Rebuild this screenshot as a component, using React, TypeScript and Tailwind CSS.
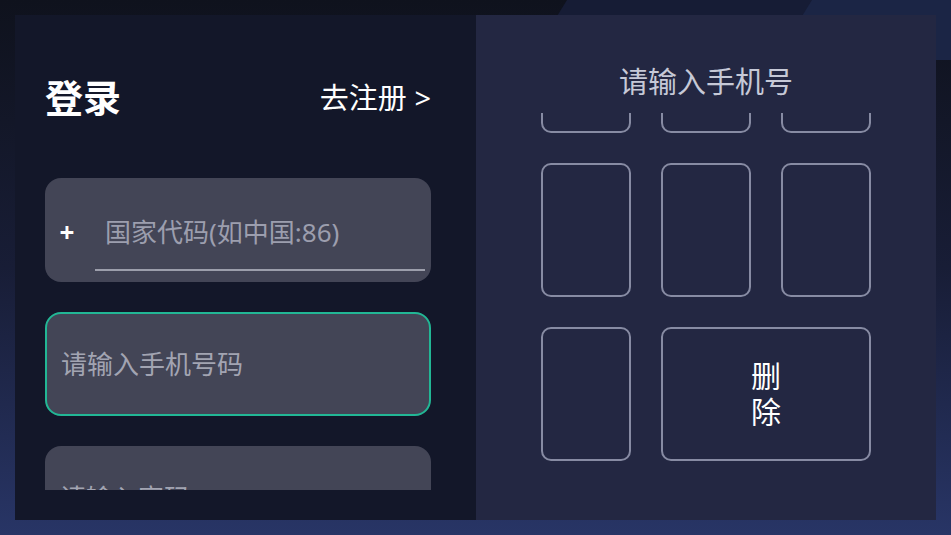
const KEYS = [0, 1, 2, 3, 4, 5];

function Key({ wide, children }: { wide?: boolean; children?: React.ReactNode }) {
  return (
    <div
      className={`h-[134px] rounded-[10px] border-2 border-[#878ba3] flex flex-col items-center justify-center text-white text-[30px] leading-[36px] ${
        wide ? 'col-span-2' : ''
      }`}
    >
      {children}
    </div>
  );
}

export default function App() {
  return (
    <div
      className="relative w-[951px] h-[535px] overflow-hidden p-[15px] bg-gradient-to-b from-[#0f121d] via-[#181d36] to-[#283566]"
      style={{ fontFamily: '"Noto Sans", "Noto Sans CJK SC", sans-serif' }}
    >
      {/* background bands at top right */}
      <div className="absolute inset-0 bg-[#161c35] [clip-path:polygon(567px_0,100%_0,100%_60px,530px_60px)]" />
      <div className="absolute inset-0 bg-[#1b2545] [clip-path:polygon(812px_0,100%_0,100%_60px,775px_60px)]" />

      <div className="relative flex h-full">
        {/* left: login form */}
        <div className="w-[461px] bg-[#131729] pl-[30px] pr-[45px] pt-[57px] pb-[30px] flex flex-col">
          <div className="flex items-center justify-between h-[50px]">
            <span className="text-white text-[38px] font-bold leading-none">登录</span>
            <span className="text-white text-[29px] leading-none">去注册 &gt;</span>
          </div>

          <div className="mt-[56px] flex-1 overflow-hidden flex flex-col gap-[30px]">
            <div className="shrink-0 h-[104px] rounded-2xl bg-[#434556] flex items-center">
              <span className="w-[44px] pt-[4px] text-white text-[26px] leading-none font-bold text-center">+</span>
              <div className="flex-1 ml-[6px] mr-[6px] h-full flex flex-col">
                <div className="flex-1 flex items-center pl-[10px] pt-[18px] text-[26px] text-[#9c9eae]">
                  国家代码(如中国:86)
                </div>
                <div className="h-[2px] bg-[#9c9eab] mb-[11px]" />
              </div>
            </div>

            <div className="shrink-0 h-[104px] rounded-2xl bg-[#434556] border-2 border-[#22b795] flex items-center pl-[14px] text-[26px] text-[#a2a4b2]">
              请输入手机号码
            </div>

            <div className="shrink-0 h-[104px] rounded-2xl bg-[#434556] flex items-center pl-[15px] text-[26px] text-[#a2a4b2]">
              请输入密码
            </div>
          </div>
        </div>

        {/* right: number pad */}
        <div className="flex-1 bg-[#232742] flex flex-col items-center pt-[47px]">
          <div className="text-[29px] leading-[40px] text-[#c6c9d7]">请输入手机号</div>
          <div className="mt-[11px] flex-1 overflow-hidden">
            <div className="mt-[-114px] grid grid-cols-[90px_90px_90px] gap-x-[30px] gap-y-[30px]">
              {KEYS.map(k => (
                <Key key={k} />
              ))}
              <Key />
              <Key wide>
                <span>删</span>
                <span>除</span>
              </Key>
            </div>
          </div>
        </div>
      </div>
    </div>
  );
}
